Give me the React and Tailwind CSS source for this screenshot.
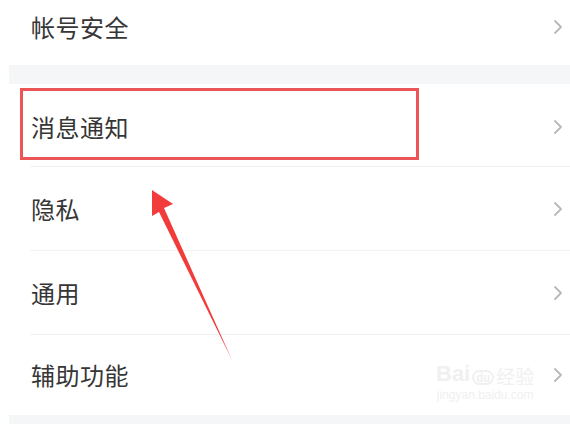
import React from 'react';

const Chevron = () => (
  <svg width="12" height="18" viewBox="0 0 12 18" className="shrink-0">
    <path d="M3 3 L9 9 L3 15" fill="none" stroke="#b8b8b8" strokeWidth="1.8" strokeLinecap="round" strokeLinejoin="round" />
  </svg>
);

const Row = ({ label, className = 'h-[83px]' }) => (
  <div className={`flex items-center justify-between pl-[22px] pr-[6px] ${className}`}>
    <span className="text-[24px] text-[#363636] leading-none tracking-[0.5px]">{label}</span>
    <Chevron />
  </div>
);

const Divider = () => <div className="ml-[21px] h-px bg-[#f1f2f3]" />;

export default function App() {
  return (
    <div
      className="relative w-[570px] h-[424px] overflow-hidden bg-white"
      style={{ fontFamily: '"Noto Sans CJK SC", "Noto Sans", sans-serif' }}
    >
      <div className="pl-[9px]">
        <Row label="帐号安全" className="h-[65px] pb-[11px]" />
        <div className="h-[19px] bg-[#f5f6f8]" />
        <Row label="消息通知" className="h-[82px] pt-[4px]" />
        <Divider />
        <Row label="隐私" />
        <Divider />
        <Row label="通用" />
        <Divider />
        <Row label="辅助功能" className="h-[80px]" />
        <div className="h-[12px] bg-[#f5f6f8]" />
      </div>

      {/* highlight box */}
      <div className="absolute left-[20px] top-[88px] w-[399px] h-[72px] border-[3px] border-[#ec5558]" />

      {/* arrow */}
      <svg className="absolute left-0 top-0" width="570" height="424" viewBox="0 0 570 424">
        <polygon points="152,190 173,204 164,208 232,360 159,212 152,216" fill="#f23b3b" />
      </svg>

      {/* watermark */}
      <div className="absolute left-[436px] top-[363px] flex flex-col items-center text-[#f0f0f0] leading-none">
        <div className="flex items-end gap-[2px]">
          <span className="text-[22px] font-bold" style={{ fontFamily: '"Liberation Sans", sans-serif' }}>Bai</span>
          <span className="rounded-full border-2 border-[#f0f0f0] px-[2px] text-[11px] font-bold">du</span>
          <span className="text-[19px]">经验</span>
        </div>
        <span className="mt-[4px] text-[12px]" style={{ fontFamily: '"Liberation Sans", sans-serif' }}>jingyan.baidu.com</span>
      </div>
    </div>
  );
}
